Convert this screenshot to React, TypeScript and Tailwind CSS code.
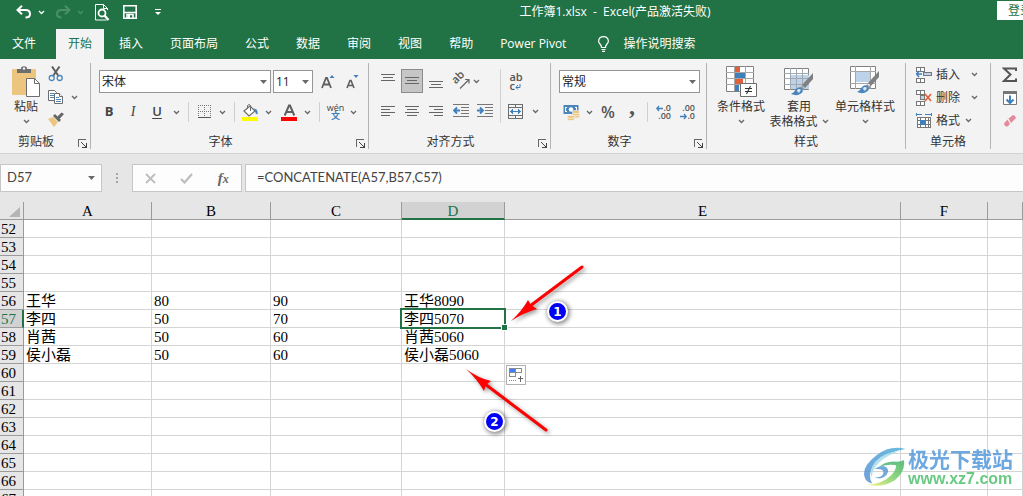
import type { ReactNode } from 'react'

const UI_FONT = "font-['Open_Sans','Noto_Sans_CJK_SC',sans-serif]"
const CELL_FONT = "font-['Liberation_Serif','Noto_Sans_CJK_SC',serif]"

const TABS = ['开始', '插入', '页面布局', '公式', '数据', '审阅', '视图', '帮助', 'Power Pivot']

const COLUMNS = ['A', 'B', 'C', 'D', 'E', 'F', '']

const FIRST_ROW = 52
const ROWS = Array.from({ length: 16 }, (_, i) => FIRST_ROW + i)

const DATA: Record<number, string[]> = {
  56: ['王华', '80', '90', '王华8090'],
  57: ['李四', '50', '70', '李四5070'],
  58: ['肖茜', '50', '60', '肖茜5060'],
  59: ['侯小磊', '50', '60', '侯小磊5060'],
}

const ACTIVE = { row: 57, col: 'D' }

/* ---------- small pieces ---------- */

function Chevron({ color = '#666' }: { color?: string }) {
  return (
    <svg width="7" height="5" viewBox="0 0 7 5" fill="none" stroke={color} strokeWidth="1.3">
      <path d="M1 1l2.5 2.5L6 1" />
    </svg>
  )
}

function Triangle() {
  return (
    <svg width="7" height="4" viewBox="0 0 7 4" fill="#6a6a6a">
      <path d="M0 0h7L3.5 4z" />
    </svg>
  )
}

function IconButton({ label, children }: { label: string; children: ReactNode }) {
  return (
    <button aria-label={label} className="flex h-6 w-6 shrink-0 items-center justify-center">
      {children}
    </button>
  )
}

function Drop({ label }: { label: string }) {
  return (
    <button aria-label={label} className="flex h-6 w-[14px] shrink-0 items-center justify-center">
      <Chevron />
    </button>
  )
}

function DropButton({ label, children }: { label: string; children: ReactNode }) {
  return (
    <div className="flex shrink-0">
      <button aria-label={label} className="flex h-6 w-[21px] items-center justify-center">
        {children}
      </button>
      <Drop label={label + '选项'} />
    </div>
  )
}

function Divider() {
  return <div className="mx-[5px] h-5 w-px shrink-0 bg-[#d0d0d0]" />
}

function Combo({ label, value, className }: { label: string; value: string; className: string }) {
  return (
    <div className={`relative h-[23px] shrink-0 ${className}`}>
      <select
        aria-label={label}
        className="block h-full w-full appearance-none border border-[#969696] bg-white pl-[2px] text-xs text-[#222]"
      >
        <option>{value}</option>
      </select>
      <span className="pointer-events-none absolute inset-y-0 right-1 flex items-center">
        <Triangle />
      </span>
    </div>
  )
}

function Group({ title, className, launcher, children }: { title: string; className: string; launcher?: boolean; children: ReactNode }) {
  return (
    <section aria-label={title} className={`flex shrink-0 flex-col border-r border-[#b4b4b4] ${className}`}>
      <div className="h-[71px]">{children}</div>
      <div className="flex h-[15px] items-center">
        <span className={`flex-1 text-center text-xs leading-[15px] text-[#333] ${launcher ? 'pr-[6px]' : ''}`}>{title}</span>
        {launcher && (
          <button aria-label={title + '设置'} className="mr-[3px] mt-1">
            <svg width="9" height="9" viewBox="0 0 9 9" fill="none" stroke="#666" shapeRendering="crispEdges">
              <path d="M.5 8V.5H8" />
              <path d="M3 3l5 5M8.5 4v4.5H4" stroke="#444" />
            </svg>
          </button>
        )}
      </div>
    </section>
  )
}

/* ---------- icons ---------- */

function Lines({ rows, height = 12 }: { rows: number[][]; height?: number }) {
  return (
    <svg width="15" height={height} viewBox={`0 0 15 ${height}`} fill="#666" shapeRendering="crispEdges">
      {rows.map(([x, y, w]) => (
        <rect key={y} x={x} y={y} width={w} height="1" />
      ))}
    </svg>
  )
}

function PasteIcon() {
  return (
    <svg width="28" height="31" viewBox="0 0 28 31">
      <rect x="0" y="3" width="24" height="26" rx="1" fill="#ecc57f" />
      <path d="M5 3h4V1.500Q12 -1 15 1.500V3h4v4H5z" fill="#6d6d6d" />
      <circle cx="12" cy="2.500" r="1.200" fill="#f3f3f3" />
      <path d="M14.500 12.500h8l5 5v13h-13z" fill="#fff" stroke="#6d6d6d" />
      <path d="M22.500 12.500v5h5" fill="none" stroke="#6d6d6d" />
    </svg>
  )
}

function CutIcon() {
  return (
    <svg width="16" height="16" viewBox="0 0 16 16" fill="none">
      <path d="M4 .5L10.500 10M11.500 .5L5 10" stroke="#5f5f5f" strokeWidth="2" />
      <circle cx="3.700" cy="12" r="2.500" stroke="#4a86bd" strokeWidth="1.300" />
      <circle cx="11.700" cy="12" r="2.500" stroke="#4a86bd" strokeWidth="1.300" />
    </svg>
  )
}

function CopyIcon() {
  return (
    <svg width="16" height="16" viewBox="0 0 16 16" fill="#fff" stroke="#6d6d6d">
      <path d="M.5 1.500h6l2 2v8h-8z" />
      <path d="M2 4.500h4M2 6.500h4M2 8.500h4" stroke="#4a86bd" />
      <path d="M6.500 4.500h5l3 3v7h-8z" />
      <path d="M11.500 4.500v3h3" />
      <path d="M8 8.500h3M8 10.500h5M8 12.500h5" stroke="#4a86bd" />
    </svg>
  )
}

function PainterIcon() {
  return (
    <svg width="16" height="15" viewBox="0 0 16 15">
      <path d="M0 7l5-2 5 5-4 5z" fill="#ecc57f" />
      <path d="M5 4l2-2 6 6-2 2z" fill="#666" />
      <path d="M9 5l4.500-4.500L16 2l-4.500 5z" fill="#666" />
    </svg>
  )
}

function BorderIcon() {
  return (
    <svg width="14" height="14" viewBox="0 0 14 14" fill="none" stroke="#777" shapeRendering="crispEdges">
      <path d="M0 .5h13M0 6.500h13M.5 0v12M6.500 0v12M12.500 0v12" strokeDasharray="1 1" />
      <path d="M0 12.500h13" stroke="#555" />
    </svg>
  )
}

function FillIcon() {
  return (
    <svg width="17" height="17" viewBox="0 0 17 17">
      <path d="M2 7l6-5 5 5-6 5z" fill="#fff" stroke="#6d6d6d" strokeWidth="1.200" />
      <path d="M5.500 5V1.500Q7 -.5 8.500 1.500V7" fill="none" stroke="#6d6d6d" />
      <path d="M11.500 4.500Q16.500 5 15.500 10q-1 1-2-1 0-2-2-4.500" fill="#4a86bd" />
      <rect y="13" x="0" width="16" height="4" fill="#ff0" />
    </svg>
  )
}

function FontColorIcon() {
  return (
    <svg width="17" height="17" viewBox="0 0 17 17">
      <path d="M3.700 11.500L8 1.500h1l4.300 10M5.500 8h6" fill="none" stroke="#5f5f5f" strokeWidth="2" />
      <rect y="13" width="16" height="4" fill="#f00" />
    </svg>
  )
}

function OrientationIcon() {
  return (
    <span className="relative h-4 w-4">
      <span className="absolute -top-[2px] -left-[2px] -rotate-45 text-[11px] leading-3 font-semibold text-[#555]">ab</span>
      <svg className="absolute inset-0" width="17" height="17" viewBox="0 0 17 17" fill="none" stroke="#666" strokeWidth="1.200">
        <path d="M7 15.500L15.500 7M12 6.500h4v4" />
      </svg>
    </span>
  )
}

function IndentIcon({ out }: { out?: boolean }) {
  return (
    <svg width="16" height="14" viewBox="0 0 16 14" fill="none">
      <path d="M0 .5h16M8 3.500h8M8 6.500h8M8 9.500h8M0 12.500h16" stroke="#777" shapeRendering="crispEdges" />
      <path d={out ? 'M1 6.500h6M4 3.500l-3 3 3 3' : 'M0 6.500h6M3 3.500l3 3-3 3'} stroke="#3f7fbb" strokeWidth="1.800" />
    </svg>
  )
}

function WrapIcon() {
  return (
    <span className="flex flex-col text-[11px] leading-[9px] font-semibold text-[#555]">
      <span>ab</span>
      <span className="flex items-end">
        c
        <svg width="6" height="6" viewBox="0 0 6 6" fill="none" stroke="#3f7fbb">
          <path d="M5 0v3.500H1M3 1L1 3.500l2 2" />
        </svg>
      </span>
    </span>
  )
}

function MergeIcon() {
  return (
    <svg width="16" height="15" viewBox="0 0 16 15" fill="none" stroke="#6d6d6d" shapeRendering="crispEdges">
      <path d="M.5 .5h14v14H.5zM.5 3.500h14M.5 11.500h14M7.500 .5v3M7.500 11.500v3" />
      <path d="M2 7.500h11" stroke="#3f7fbb" />
      <path d="M5 5v5L2 7.500zM10 5v5l3-2.500z" fill="#3f7fbb" stroke="none" />
    </svg>
  )
}

function CurrencyIcon() {
  return (
    <svg width="18" height="17" viewBox="0 0 18 17">
      <path d="M.5 1h15v9H.5z" fill="#4a86bd" />
      <path d="M2 3h2v1H3v3h1v1H2zM12 3h2v3h-1V4h-1z" fill="#fff" />
      <circle cx="8" cy="5.500" r="2.200" fill="#fff" />
      <g fill="#ecc57f" stroke="#f3f3f3" strokeWidth=".7">
        <ellipse cx="13" cy="12.500" rx="3.800" ry="1.600" />
        <ellipse cx="13" cy="10.300" rx="3.800" ry="1.600" />
        <ellipse cx="13" cy="8" rx="3.800" ry="1.600" />
        <ellipse cx="8" cy="15" rx="3.800" ry="1.600" />
        <ellipse cx="8" cy="12.800" rx="3.800" ry="1.600" />
      </g>
    </svg>
  )
}

function DecimalIcon({ more }: { more?: boolean }) {
  const arrow = (
    <svg width="7" height="7" viewBox="0 0 7 7" fill="none" stroke="#3f7fbb" strokeWidth="1.300">
      <path d={more ? 'M.5 3.500H7M3 1L.8 3.500 3 6' : 'M0 3.500h6.500M4 1l2.200 2.500L4 6'} />
    </svg>
  )
  return (
    <span className="flex w-4 flex-col text-[9px] leading-[8px] font-semibold text-[#555]">
      <span className="flex items-center justify-end">
        {more && arrow}
        {more ? '.0' : '.00'}
      </span>
      <span className="flex items-center justify-end">
        {!more && arrow}
        {more ? '.00' : '.0'}
      </span>
    </span>
  )
}

function Brush() {
  return (
    <>
      <path d="M29 7v6l-8 9-3-3z" fill="#808080" />
      <path d="M17 20l4 3-2 1.500-3-2.500z" fill="#9a9a9a" />
      <path d="M7 28q3-1 5-5 3-3 6-.5 2 3-1 5-4 3-10 .5" fill="#4a86bd" />
      <path d="M13 24q2-2 4 0-1 1-2 3-2-1-2-3" fill="#dfeaf5" />
    </>
  )
}

function ConditionalIcon() {
  return (
    <svg width="31" height="31" viewBox="0 0 31 31">
      <path d="M.5 .5h27v25H.5z" fill="#fff" stroke="#808080" />
      <path d="M8.500 0v25M19.500 0v25M0 6.500h28M0 12.500h28M0 18.500h28" stroke="#a6a6a6" />
      <path d="M9 1h5v5H9zM9 13h8v5H9z" fill="#e0603c" />
      <path d="M9 7h10v5H9zM9 19h4v6H9z" fill="#3f7fbb" />
      <path d="M14.500 17.500h16v13h-16z" fill="#fff" stroke="#6d6d6d" />
      <path d="M19 22.500h7M19 25.500h7M24.500 20l-4 8" stroke="#333" strokeWidth="1.100" />
    </svg>
  )
}

function TableStyleIcon() {
  return (
    <svg width="30" height="31" viewBox="0 0 30 31">
      <path d="M.5 2.500h24v21H.5z" fill="#fff" stroke="#808080" />
      <path d="M7 9h18v14H7z" fill="#bdd3ea" />
      <path d="M6.500 2v22M12.500 2v22M18.500 2v22M0 7.500h25M0 12.500h25M0 18.500h25" stroke="#a0a8b0" />
      <Brush />
    </svg>
  )
}

function CellStyleIcon() {
  return (
    <svg width="30" height="31" viewBox="0 0 30 31">
      <path d="M.5 .5h25v22H.5z" fill="#fff" stroke="#808080" />
      <path d="M5.500 0v23M20.500 0v23M0 5.500h26M0 17.500h26" stroke="#a6a6a6" />
      <path d="M6 6h14v10H6z" fill="#bdd3ea" />
      <g transform="translate(0 -2)">
        <Brush />
      </g>
    </svg>
  )
}

function InsertCellsIcon() {
  return (
    <svg width="16" height="16" viewBox="0 0 16 16" fill="#fff" stroke="#777" shapeRendering="crispEdges">
      <path d="M.5 .5h4v4h-4zM4.500 .5h4v4h-4zM.5 11.500h4v4h-4zM4.500 11.500h4v4h-4z" />
      <path d="M7.500 5.500h8v3h-8z" fill="#bdd3ea" />
      <path d="M0 7h6M3 4L.5 7 3 10" fill="none" stroke="#3f7fbb" strokeWidth="1.500" shapeRendering="auto" />
    </svg>
  )
}

function DeleteCellsIcon() {
  return (
    <svg width="16" height="16" viewBox="0 0 16 16" fill="#fff" stroke="#777" shapeRendering="crispEdges">
      <path d="M.5 .5h4v4h-4zM4.500 .5h4v4h-4zM.5 11.500h4v4h-4zM4.500 11.500h4v4h-4z" />
      <path d="M4.500 5.500h4v4h-4z" fill="#bdd3ea" />
      <path d="M9 4l6 7M15 4l-6 7" fill="none" stroke="#e0603c" strokeWidth="1.700" shapeRendering="auto" />
    </svg>
  )
}

function FormatCellsIcon() {
  return (
    <svg width="16" height="16" viewBox="0 0 16 16" fill="#fff" stroke="#777" shapeRendering="crispEdges">
      <path d="M1.500 4.500h13v10h-13z" />
      <path d="M1 7.500h14M1 11.500h14M4.500 4v11M9.500 4v11M12.500 4v11" />
      <path d="M4 7h5v5H4z" fill="#3f7fbb" stroke="none" />
      <path d="M.5 0v3M15.500 0v3M1 1.500h5M9 1.500h6" stroke="#3f7fbb" />
    </svg>
  )
}

/* ---------- page sections ---------- */

function TitleBar() {
  return (
    <header className="flex h-[29px] items-start text-white">
      <div className="flex h-6 w-[233px] shrink-0 items-center pl-3">
        <IconButton label="撤消">
          <svg width="16" height="14" viewBox="0 0 16 14" fill="none" stroke="#fff" strokeWidth="2">
            <path d="M6 .8L1.500 5 6 9.200M2 5h7.500Q14 5 14 9q0 3.500-4.500 3.500" />
          </svg>
        </IconButton>
        <span className="ml-px flex w-2 justify-center"><Chevron color="#fff" /></span>
        <span className="ml-[6px]">
          <IconButton label="恢复">
            <svg width="16" height="14" viewBox="0 0 16 14" fill="none" stroke="#4b9068" strokeWidth="2">
              <path d="M10 .8L14.500 5 10 9.200M14 5H6.500Q2 5 2 9q0 3.500 4.500 3.500" />
            </svg>
          </IconButton>
        </span>
        <span className="ml-px flex w-2 justify-center"><Chevron color="#4b9068" /></span>
        <span className="ml-[6px]">
          <IconButton label="打印预览">
            <svg width="15" height="17" viewBox="0 0 15 17" fill="none" stroke="#fff">
              <path d="M12.500 6V4.500L8.500.5H.5v15.500h11" />
              <path d="M8.500 .5v4h4" />
              <circle cx="7" cy="9" r="3.500" strokeWidth="1.800" />
              <path d="M9.500 11.500l4 4.500" strokeWidth="2.400" />
            </svg>
          </IconButton>
        </span>
        <span className="ml-1">
          <IconButton label="保存">
            <svg width="14" height="14" viewBox="0 0 14 14" fill="none" stroke="#fff" strokeWidth="1.600">
              <path d="M.8 .8h12.400v12.400H.8z" />
              <path d="M1 7.500h12M4 13V9.500h6V13" />
              <path d="M5 10h2v4H5z" fill="#fff" stroke="none" />
            </svg>
          </IconButton>
        </span>
        <span className="ml-1">
          <IconButton label="自定义快速访问工具栏">
            <svg width="6" height="8" viewBox="0 0 6 8" fill="#fff">
              <path d="M0 1h6v1H0zM0 4h6L3 7z" />
            </svg>
          </IconButton>
        </span>
      </div>
      <h1 className="h-6 flex-1 text-center text-xs leading-6 whitespace-pre">工作簿1.xlsx  -  Excel(产品激活失败)</h1>
      <button className="mt-px h-[19px] w-[26px] shrink-0 overflow-hidden bg-white pl-[11px] text-left text-xs leading-[19px] whitespace-nowrap text-[#217346]">
        登录
      </button>
    </header>
  )
}

function TabBar() {
  return (
    <nav className="flex h-[30px] items-stretch text-xs whitespace-nowrap text-white">
      <button className="mr-2 px-3">文件</button>
      <div className="flex gap-[3px]">
        {TABS.map((tab, i) => (
          <button key={tab} className={`px-3 ${i === 0 ? 'bg-[#f3f3f3] text-[#217346]' : ''}`}>
            {tab}
          </button>
        ))}
      </div>
      <button className="ml-5 flex items-center gap-[14px]">
        <svg width="11" height="16" viewBox="0 0 11 16" fill="none" stroke="#fff" strokeWidth="1.200">
          <path d="M3.500 11.500Q3.500 9.500 2 8 .6 6.700 .6 5 1 .6 5.500 .6T10.400 5q0 1.700-1.400 3-1.500 1.500-1.500 3.500zM3.500 13.500h4M4 15.400h3" />
        </svg>
        操作说明搜索
      </button>
    </nav>
  )
}

function BigButton({ icon, lines, className, inlineDrop }: { icon: ReactNode; lines: string[]; className: string; inlineDrop?: boolean }) {
  return (
    <button className={`flex shrink-0 flex-col items-center text-xs leading-[15px] whitespace-nowrap text-[#333] ${className}`}>
      <span className="mb-[2px]">{icon}</span>
      <span>{lines[0]}</span>
      <span className="flex h-[15px] items-center">
        {lines[1]}
        <span className={inlineDrop ? 'ml-1' : ''}><Chevron /></span>
      </span>
    </button>
  )
}

function Ribbon() {
  return (
    <div className="flex overflow-hidden border-b border-[#d2d2d2] bg-[#f3f3f3] pt-1 pb-1">
      <Group title="剪贴板" className="w-[91px]" launcher>
        <div className="flex pt-[3px] pl-3">
          <BigButton className="w-7" icon={<PasteIcon />} lines={['粘贴']} />
          <div className="ml-[8px] flex flex-col">
            <button aria-label="剪切" className="flex h-[23px]"><CutIcon /></button>
            <div className="flex h-[23px]">
              <button aria-label="复制" className="flex"><CopyIcon /></button>
              <span className="ml-[7px] mt-[6px]"><Chevron /></span>
            </div>
            <button aria-label="格式刷" className="flex h-[23px]"><PainterIcon /></button>
          </div>
        </div>
      </Group>

      <Group title="字体" className="w-[278px]" launcher>
        <div className="flex pt-[7px] pl-2">
          <Combo label="字体名称" value="宋体" className="w-[172px]" />
          <Combo label="字号" value="11" className="ml-[2px] mr-[3px] w-10" />
          <IconButton label="增大字号">
            <svg width="14" height="16" viewBox="0 0 14 16" fill="none">
              <path d="M1 14L5 4h1l4 10M2.500 10.500h6" stroke="#5f5f5f" strokeWidth="1.800" />
              <path d="M8.500 4l2.500-3 2.500 3z" fill="#3f7fbb" />
            </svg>
          </IconButton>
          <IconButton label="减小字号">
            <svg width="14" height="16" viewBox="0 0 14 16" fill="none">
              <path d="M2 14l3-7.500h1L9 14M3 11.500h5" stroke="#5f5f5f" strokeWidth="1.600" />
              <path d="M8.500 1h5L11 4z" fill="#3f7fbb" />
            </svg>
          </IconButton>
        </div>
        <div className="mt-[6px] flex items-center pl-[6px] text-[#444]">
          <IconButton label="加粗"><b className="text-[13px]">B</b></IconButton>
          <IconButton label="倾斜"><i className="font-['Liberation_Serif',serif] text-sm">I</i></IconButton>
          <IconButton label="下划线"><u className="text-[13px] font-semibold underline-offset-2">U</u></IconButton>
          <Drop label="下划线选项" />
          <Divider />
          <DropButton label="边框"><BorderIcon /></DropButton>
          <Divider />
          <DropButton label="填充颜色"><FillIcon /></DropButton>
          <span className="ml-1"><DropButton label="字体颜色"><FontColorIcon /></DropButton></span>
          <Divider />
          <DropButton label="拼音">
            <span className="flex flex-col items-center text-[9px] leading-[8px]">
              <span>wén</span>
              <span className="font-bold text-[#3f7fbb]">文</span>
            </span>
          </DropButton>
        </div>
      </Group>

      <Group title="对齐方式" className="w-[182px]" launcher>
        <div className="flex pt-[6px] pl-[7px]">
          <div className="flex flex-col gap-[6px]">
            <div className="flex">
              <IconButton label="顶端对齐"><Lines height={16} rows={[[0, 1, 14], [2, 4, 10], [0, 7, 14]]} /></IconButton>
              <button aria-label="垂直居中" className="mx-px flex h-6 w-[22px] items-center justify-center border border-[#8c8c8c] bg-[#c6c6c6]">
                <Lines height={12} rows={[[0, 2, 14], [2, 5, 10], [0, 8, 14]]} />
              </button>
              <IconButton label="底端对齐"><Lines height={16} rows={[[0, 8, 14], [2, 11, 10], [0, 14, 14]]} /></IconButton>
              <span className="ml-px"><IconButton label="方向"><OrientationIcon /></IconButton></span>
              <span className="flex w-2 items-center"><Chevron /></span>
            </div>
            <div className="flex">
              <IconButton label="左对齐"><Lines rows={[[0, 1, 14], [0, 4, 9], [0, 7, 14], [0, 10, 9]]} /></IconButton>
              <IconButton label="居中"><Lines rows={[[0, 1, 14], [2, 4, 10], [0, 7, 14], [2, 10, 10]]} /></IconButton>
              <IconButton label="右对齐"><Lines rows={[[0, 1, 14], [5, 4, 9], [0, 7, 14], [5, 10, 9]]} /></IconButton>
              <span className="ml-px"><IconButton label="减少缩进量"><IndentIcon out /></IconButton></span>
              <IconButton label="增加缩进量"><IndentIcon /></IconButton>
            </div>
          </div>
          <div className="mx-[3px] w-px bg-[#d0d0d0]" />
          <div className="flex flex-col gap-[6px]">
            <IconButton label="自动换行"><WrapIcon /></IconButton>
            <div className="flex">
              <IconButton label="合并后居中"><MergeIcon /></IconButton>
              <Drop label="合并选项" />
            </div>
          </div>
        </div>
      </Group>

      <Group title="数字" className="w-[156px]" launcher>
        <div className="pt-[7px] pl-2">
          <Combo label="数字格式" value="常规" className="w-[141px]" />
          <div className="mt-[7px] flex items-center pl-[2px] text-[#555]">
            <DropButton label="会计数字格式"><CurrencyIcon /></DropButton>
            <IconButton label="百分比"><span className="text-base font-semibold">%</span></IconButton>
            <IconButton label="千位分隔"><span className="pb-3 font-['Liberation_Serif',serif] text-2xl leading-3 font-bold">,</span></IconButton>
            <div className="mx-[3px] h-5 w-px bg-[#d0d0d0]" />
            <IconButton label="增加小数位数"><DecimalIcon more /></IconButton>
            <IconButton label="减少小数位数"><DecimalIcon /></IconButton>
          </div>
        </div>
      </Group>

      <Group title="样式" className="w-[199px]">
        <div className="flex pt-[3px] pl-[10px]">
          <BigButton className="w-12" icon={<ConditionalIcon />} lines={['条件格式']} />
          <BigButton className="ml-1 w-[60px]" icon={<TableStyleIcon />} lines={['套用', '表格格式']} inlineDrop />
          <BigButton className="ml-[6px] w-[60px]" icon={<CellStyleIcon />} lines={['单元格样式']} />
        </div>
      </Group>

      <Group title="单元格" className="w-[85px]">
        <div className="flex flex-col pl-[10px] text-xs text-[#333]">
          <button className="flex h-[23px] items-center"><InsertCellsIcon /><span className="mr-[11px] ml-1">插入</span><Chevron /></button>
          <button className="flex h-[23px] items-center"><DeleteCellsIcon /><span className="mr-[11px] ml-1">删除</span><Chevron /></button>
          <button className="flex h-[23px] items-center"><FormatCellsIcon /><span className="mr-[5px] ml-1">格式</span><Chevron /></button>
        </div>
      </Group>

      <div className="flex flex-col pl-[11px]">
        <button aria-label="求和" className="flex h-[23px] items-center">
          <svg width="16" height="16" viewBox="0 0 16 16" fill="none" stroke="#555" strokeWidth="2">
            <path d="M14 4V1.500H2L8.500 7.500 2 14h12v-2.500" />
          </svg>
        </button>
        <button aria-label="填充" className="flex h-[23px] items-center">
          <svg width="16" height="16" viewBox="0 0 16 16" fill="none">
            <path d="M1.500 1.500h13v13h-13z" fill="#fff" stroke="#777" />
            <path d="M1 1h14v3H1z" fill="#777" />
            <path d="M8 5.500V13M4.500 9.500L8 13l3.500-3.500" stroke="#3f7fbb" strokeWidth="2" />
          </svg>
        </button>
        <button aria-label="清除" className="flex h-[23px] items-center">
          <svg width="16" height="14" viewBox="0 0 16 14" fill="#e58a9b">
            <path d="M6.500 4.500L11 1q2 0 3 3l-5 5zM5.500 5.500L8 10l-2.500 2.500q-3 .5-3.500-3z" />
          </svg>
        </button>
      </div>
    </div>
  )
}

function FormulaBar() {
  return (
    <div className="flex items-stretch bg-[#e6e6e6] pt-[10px] pb-[10px] text-[13px] text-[#444]">
      <div className="flex h-7 w-[102px] shrink-0 items-center border border-[#c6c6c6] bg-[#fdfdfd] pr-[6px]">
        <input aria-label="名称框" defaultValue="D57" className="w-0 flex-1 bg-transparent pl-[6px] font-['Lato',sans-serif] outline-none" />
        <button aria-label="名称列表"><Triangle /></button>
      </div>
      <div className="flex w-[30px] shrink-0 items-center justify-center">
        <svg width="2" height="11" viewBox="0 0 2 11" fill="#a6a6a6">
          <path d="M0 0h2v2H0zM0 4h2v2H0zM0 8h2v2H0z" />
        </svg>
      </div>
      <div className="flex w-[110px] shrink-0 items-center justify-around border border-[#c6c6c6] bg-[#fdfdfd]">
        <button aria-label="取消">
          <svg width="11" height="11" viewBox="0 0 11 11" stroke="#bdbdbd" strokeWidth="1.800">
            <path d="M1 1l9 9M10 1l-9 9" />
          </svg>
        </button>
        <button aria-label="输入">
          <svg width="13" height="11" viewBox="0 0 13 11" fill="none" stroke="#bdbdbd" strokeWidth="2.200">
            <path d="M1 6l3.500 3.500L12 1" />
          </svg>
        </button>
        <button aria-label="插入函数" className="font-['Liberation_Serif',serif] text-[15px] leading-4 font-bold text-[#666] italic">
          f<span className="text-xs">x</span>
        </button>
      </div>
      <input
        aria-label="编辑栏"
        defaultValue="=CONCATENATE(A57,B57,C57)"
        className="ml-[3px] w-0 flex-1 border border-r-0 border-[#c6c6c6] bg-[#fdfdfd] pl-[11px] font-['Lato',sans-serif] outline-none"
      />
    </div>
  )
}

function Badge({ n, className }: { n: number; className: string }) {
  return (
    <span
      className={`absolute flex h-[21px] w-[21px] items-center justify-center rounded-full border-2 border-white bg-[#0000f5] font-['DejaVu_Sans',sans-serif] text-xs font-bold text-white shadow-[1px_1px_4px_1px_rgba(0,0,0,0.45)] ${className}`}
    >
      {n}
    </span>
  )
}

function Annotations() {
  return (
    <>
      <svg className="pointer-events-none absolute top-0 left-[440px] drop-shadow-[2px_2px_2px_rgba(0,0,0,0.4)]" width="160" height="250" viewBox="0 0 160 250">
        <g stroke="#f00" strokeWidth="3" strokeLinecap="round">
          <path d="M142 65L90 104" />
          <path d="M106 228L45 182" />
        </g>
        <path d="M71 119Q82 109 88 98l3 5 6 4q-14 4-26 12z" fill="#f00" />
        <path d="M26 167q12 9 25 12l-5 4-2 6q-7-12-18-22z" fill="#f00" />
      </svg>
      <Badge n={1} className="top-[99px] left-[547px]" />
      <Badge n={2} className="top-[209px] left-[484px]" />
      <button aria-label="自动填充选项" className="absolute top-[163px] left-[506px] border border-[#b0b0b0] bg-white p-px">
        <svg width="16" height="16" viewBox="0 0 16 16" fill="#fff" stroke="#8a8a8a" shapeRendering="crispEdges">
          <path d="M1.500 1.500h6v4h-6zM7.500 1.500h6v4h-6zM1.500 5.500h6v4h-6z" />
          <path d="M2 2h5v3H2z" fill="#3f7fff" stroke="none" />
          <path d="M1 13.500h8" strokeDasharray="1 1" />
          <path d="M12.500 9v6M10 11.500h5" stroke="#666" />
        </svg>
      </button>
    </>
  )
}

function Watermark() {
  return (
    <div className="pointer-events-none absolute right-[10px] bottom-[9px] flex items-center gap-[2px] whitespace-nowrap opacity-85">
      <svg width="42" height="40" viewBox="0 0 128 120">
        <defs>
          <linearGradient id="wm-sky" x1="0" y1="1" x2="1" y2="0">
            <stop offset="0" stopColor="#5b8fd6" />
            <stop offset="1" stopColor="#4fb3dc" />
          </linearGradient>
          <linearGradient id="wm-tail" x1="0" y1="1" x2="1" y2="0">
            <stop offset="0" stopColor="#f2ee70" />
            <stop offset=".5" stopColor="#7fd06c" />
            <stop offset="1" stopColor="#3fb568" />
          </linearGradient>
        </defs>
        <path d="M127 5Q80-8 38 24-6 58 1 88q4 18 24 22Q8 82 34 50 62 16 127 5z" fill="url(#wm-sky)" />
        <path d="M108 12Q70 24 46 46 18 74 26 98q-14-26 8-54Q60 14 108 12z" fill="#a5dcea" />
        <path d="M44 62q22-22 56-18 14 0 22-6-6 18-28 16Q66 50 44 62z" fill="#4fb873" />
        <path d="M32 66q24-16 38-4 10 14-8 28-16 10-30 0 18 4 26-8 8-18-26-16z" fill="#5b9bd8" />
        <path d="M122 40q4 36-28 60-40 24-82 14 46-4 72-30 18-20 12-32 16-2 26-12z" fill="url(#wm-tail)" />
      </svg>
      <div className="flex flex-col">
        <span className="font-['Noto_Sans_CJK_SC',sans-serif] text-[21px] leading-[23px] font-bold text-[#5599dc]">极光下载站</span>
        <span className="font-['Liberation_Sans',sans-serif] text-base leading-[17px] font-bold text-[#4fc06d]">www.xz7.com</span>
      </div>
    </div>
  )
}

function Sheet() {
  return (
    <main className="relative min-h-0 flex-1 overflow-hidden bg-white">
      <table className={`w-full table-fixed border-separate border-spacing-0 text-[15px] leading-4 text-black ${CELL_FONT}`}>
        <colgroup>
          <col className="w-6" />
          <col className="w-[128px]" />
          <col className="w-[119px]" />
          <col className="w-[131px]" />
          <col className="w-[103px]" />
          <col className="w-[396px]" />
          <col className="w-[87px]" />
          <col />
        </colgroup>
        <thead>
          <tr className="h-[18px]">
            <th aria-label="全选" className="border-r border-b border-[#9b9b9b] bg-[#e6e6e6] p-0">
              <svg className="mt-[3px] ml-[9px]" width="11" height="10" viewBox="0 0 11 10" fill="#b4b4b4">
                <path d="M11 0v10H0z" />
              </svg>
            </th>
            {COLUMNS.map((col) => (
              <th
                key={col}
                scope="col"
                className={
                  col === ACTIVE.col
                    ? 'border-r border-b-2 border-r-[#9b9b9b] border-b-[#217346] bg-[#d2d2d2] p-0 pt-[2px] leading-[14px] font-normal text-[#217346]'
                    : 'border-r border-b border-[#9b9b9b] bg-[#e6e6e6] p-0 pt-[2px] leading-[15px] font-normal'
                }
              >
                {col}
              </th>
            ))}
          </tr>
        </thead>
        <tbody>
          {ROWS.map((row) => (
            <tr key={row} className="h-[18px]">
              <th
                scope="row"
                className={
                  row === ACTIVE.row
                    ? 'border-r-2 border-b border-r-[#217346] border-b-[#9b9b9b] bg-[#d2d2d2] p-0 pt-[2px] pl-px text-left leading-[15px] font-normal text-[#217346]'
                    : 'border-r border-b border-[#9b9b9b] bg-[#e6e6e6] p-0 pt-[2px] pl-px text-left leading-[15px] font-normal'
                }
              >
                {row}
              </th>
              {COLUMNS.map((col, i) => (
                <td key={col} className="relative border-r border-b border-[#d4d4d4] p-0 pt-px pl-[2px] whitespace-nowrap">
                  {DATA[row]?.[i]}
                  {row === ACTIVE.row && col === ACTIVE.col && (
                    <span className="pointer-events-none absolute -inset-x-[2px] -inset-y-[2px] z-10 border-2 border-[#217346]">
                      <span className="absolute -right-1 -bottom-1 h-[7px] w-[7px] border border-white bg-[#217346]" />
                    </span>
                  )}
                </td>
              ))}
            </tr>
          ))}
        </tbody>
      </table>
      <Annotations />
      <Watermark />
    </main>
  )
}

export default function App() {
  return (
    <div className={`flex h-screen flex-col overflow-hidden ${UI_FONT}`}>
      <div className="bg-[#217346]">
        <TitleBar />
        <TabBar />
      </div>
      <Ribbon />
      <FormulaBar />
      <Sheet />
    </div>
  )
}
